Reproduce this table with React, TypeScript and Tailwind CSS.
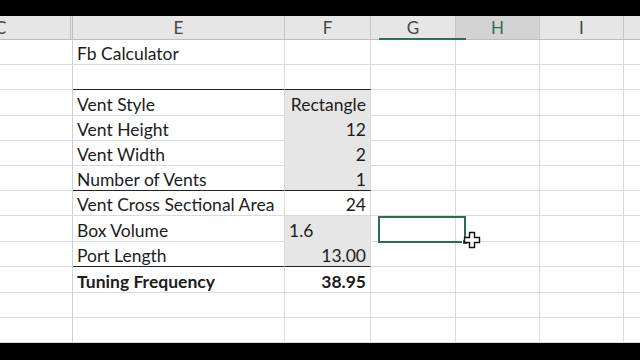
import React from "react";

type Row = {
  h: number;
  label?: string;
  value?: string;
  fill?: boolean;
  left?: boolean;
  bold?: boolean;
  bottomRule?: boolean;
};

const rows: Row[] = [
  { h: 25, label: "Fb Calculator" },
  { h: 25, bottomRule: true },
  { h: 26, label: "Vent Style", value: "Rectangle", fill: true },
  { h: 25, label: "Vent Height", value: "12", fill: true },
  { h: 25, label: "Vent Width", value: "2", fill: true },
  { h: 25, label: "Number of Vents", value: "1", fill: true, bottomRule: true },
  { h: 25, label: "Vent Cross Sectional Area", value: "24" },
  { h: 26, label: "Box Volume", value: "1.6", fill: true, left: true },
  { h: 25, label: "Port Length", value: "13.00", fill: true, bottomRule: true },
  { h: 26, label: "Tuning Frequency", value: "38.95", bold: true },
  { h: 25 },
  { h: 25 },
];

const font = { fontFamily: "Lato, 'Open Sans', sans-serif" };

function HeaderRow() {
  return (
    <div className="relative flex h-[24px] bg-[#e6e6e6] border-b border-b-[#bdbdbd] text-[17px] text-[#444]">
      <div className="w-[73px] flex items-center border-r-[3px] border-double border-r-[#bdbdbd] overflow-hidden">
        <span className="-ml-[5px]">C</span>
      </div>
      <div className="w-[212px] flex items-center justify-center border-r border-r-[#c6c6c6]">E</div>
      <div className="w-[86px] flex items-center justify-center border-r border-r-[#c6c6c6]">F</div>
      <div className="w-[85px] flex items-center justify-center border-r border-r-[#c6c6c6]">G</div>
      <div className="w-[84px] flex items-center justify-center border-r border-r-[#c6c6c6] bg-[#d3d3d3] text-[#3d6b55]">H</div>
      <div className="w-[84px] flex items-center justify-center border-r border-r-[#c6c6c6]">I</div>
      <div className="flex-1" />
      <div className="absolute left-[379px] bottom-[-1px] w-[87px] h-[2px] bg-[#2e7150]" />
    </div>
  );
}

function SheetRow({ row }: { row: Row }) {
  const grid = "border-b border-b-[#dadada]";
  const rule = "border-b border-b-[#222222]";
  const weight = row.bold ? "font-bold" : "";
  const valueBottom = row.bottomRule ? rule : row.fill ? "border-b border-b-[#e7e6e6]" : grid;
  return (
    <div className="flex text-[17.5px] leading-[20px] text-[#1c1c1c]" style={{ height: row.h }}>
      <div className={`w-[73px] border-r border-r-[#d0d0d0] ${grid}`} />
      <div className={`w-[212px] flex items-end pl-[4px] border-r border-r-[#dadada] ${row.bottomRule ? rule : grid} ${weight}`}>
        {row.label}
      </div>
      <div
        className={`w-[86px] flex items-end px-[4px] border-r border-r-[#dadada] ${row.left ? "justify-start" : "justify-end"} ${row.fill ? "bg-[#e7e6e6]" : ""} ${valueBottom} ${weight}`}
      >
        {row.value}
      </div>
      <div className={`w-[85px] border-r border-r-[#dadada] ${grid}`} />
      <div className={`w-[84px] border-r border-r-[#dadada] ${grid}`} />
      <div className={`w-[84px] border-r border-r-[#dadada] ${grid}`} />
      <div className={`flex-1 ${grid}`} />
    </div>
  );
}

export default function App() {
  return (
    <div className="w-[640px] h-[360px] bg-black pt-[16px]" style={font}>
      <div className="relative bg-white h-[327px] overflow-hidden">
        <HeaderRow />
        {rows.map((r, i) => (
          <SheetRow key={i} row={r} />
        ))}

        {/* active cell */}
        <div className="absolute left-[378px] top-[200px] w-[88px] h-[27px] border-2 border-[#2a6e4c]" />
        <div className="absolute left-[462px] top-[223px] w-[6px] h-[6px] bg-[#2a6e4c] border border-white" />

        {/* cell-select cursor */}
        <svg className="absolute left-[463px] top-[215px]" width="19" height="19" viewBox="0 0 19 19">
          <path
            d="M6.5 1.5h5v5h5v5h-5v5h-5v-5h-5v-5h5z"
            fill="#fff"
            stroke="#111"
            strokeWidth="1.4"
          />
        </svg>
      </div>
    </div>
  );
}
